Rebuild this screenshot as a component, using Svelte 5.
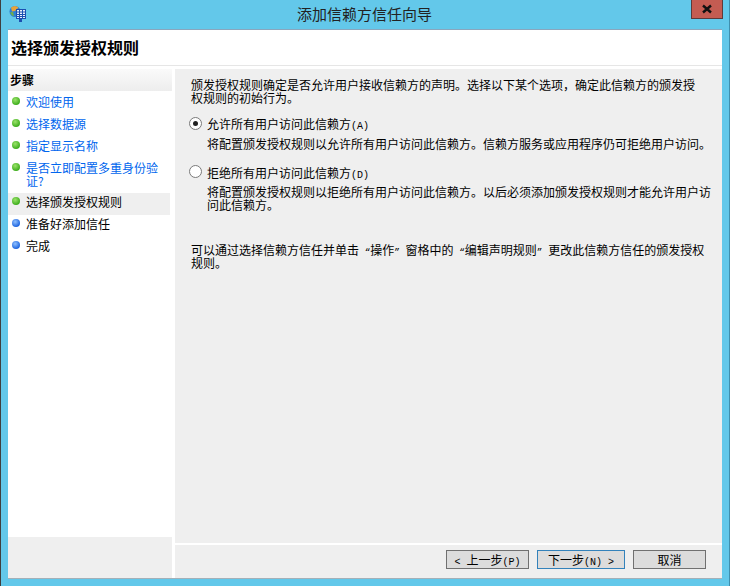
<script>
  const steps = [
    { t: '欢迎使用', c: 'g', link: true },
    { t: '选择数据源', c: 'g', link: true },
    { t: '指定显示名称', c: 'g', link: true },
    { t: '是否立即配置多重身份验证?', c: 'g', link: true },
    { t: '选择颁发授权规则', c: 'g', cur: true },
    { t: '准备好添加信任', c: 'b' },
    { t: '完成', c: 'b' }
  ];
</script>

<div class="win">
  <div class="titlebar">
    <svg class="appicon" width="17" height="18" viewBox="0 0 17 18">
      <circle cx="6" cy="6.500" r="5.500" fill="#2f7fd0"/>
      <path d="M2 2.500 Q6 -0.500 9.500 2.500 L6 6 L3 6.500Z" fill="#e8a33a"/>
      <path d="M1 7.500 L4 7 L5 11 L3 10.500Z" fill="#6fb04a"/>
      <rect x="7.500" y="4.500" width="9" height="9" fill="#e8f0fa" stroke="#1c4fb0"/>
      <path d="M8 7h8M8 9.500h8M8 11.500h8M10.500 5v8M13.500 5v8" stroke="#1c4fb0" stroke-width="1"/>
      <rect x="10" y="14" width="3" height="3" fill="#1c4fb0"/>
    </svg>
    <div class="title">添加信赖方信任向导</div>
    <div class="close"><svg width="12" height="10" viewBox="0 0 12 10"><path d="M2 1.500 L10 8.500 M10 1.500 L2 8.500" stroke="#111" stroke-width="2.400"/></svg></div>
  </div>
  <div class="client">
    <div class="header">选择颁发授权规则</div>
    <div class="body">
      <div class="side">
        <div class="sidehead">步骤</div>
        <ul class="steps">
          {#each steps as s}
            <li class:cur={s.cur} class:link={s.link}>
              <span class="dot {s.c}"></span>
              <span class="label">{s.t}</span>
            </li>
          {/each}
        </ul>
        <div class="sidefoot"></div>
      </div>
      <div class="main">
        <div class="content">
          <p class="intro">颁发授权规则确定是否允许用户接收信赖方的声明。选择以下某个选项，确定此信赖方的颁发授<br>权规则的初始行为。</p>
          <label class="opt first"><span class="radio on"></span><span>允许所有用户访问此信赖方<span class="lat">(A)</span></span></label>
          <p class="desc">将配置颁发授权规则以允许所有用户访问此信赖方。信赖方服务或应用程序仍可拒绝用户访问。</p>
          <label class="opt second"><span class="radio"></span><span>拒绝所有用户访问此信赖方<span class="lat">(D)</span></span></label>
          <p class="desc">将配置颁发授权规则以拒绝所有用户访问此信赖方。以后必须添加颁发授权规则才能允许用户访<br>问此信赖方。</p>
          <p class="note">可以通过选择信赖方信任并单击<span class="q">{' “'}</span>操作<span class="q">{'” '}</span>窗格中的<span class="q">{' “'}</span>编辑声明规则<span class="q">{'” '}</span>更改此信赖方信任的颁发授权<br>规则。</p>
        </div>
        <div class="footer">
          <button class="back"><span class="lat">{'< '}</span>上一步<span class="lat">(P)</span></button>
          <button class="next">下一步<span class="lat">{'(N) >'}</span></button>
          <button class="cancel">取消</button>
        </div>
      </div>
    </div>
  </div>
</div>

<style>
  :global(body) { margin: 0; background: #63c8ea; }
  .win {
    width: 730px; height: 586px; box-sizing: border-box;
    background: #63c8ea;
    border-left: 1px solid #3f3f3f;
    border-right: 1px solid #3f8fae;
    display: flex; flex-direction: column;
    font-family: "Noto Sans CJK SC", "Liberation Sans", sans-serif;
    font-size: 12px; color: #000;
    overflow: hidden;
  }
  .lat { font-family: "Liberation Mono", monospace; font-size: 10px; line-height: 0; white-space: pre; }
  .q { font-family: "Liberation Mono", monospace; font-size: 9.400px; line-height: 0; white-space: pre; }
  .titlebar { height: 29px; flex: none; display: flex; align-items: flex-start; padding-left: 8px; }
  .appicon { margin-top: 5px; flex: none; }
  .title { flex: 1; text-align: center; font-size: 15px; line-height: 27px; color: #222; padding-left: 12px; }
  .close {
    width: 32px; height: 19px; margin-right: 6px; box-sizing: border-box;
    background: #c45c52; border: 1px solid #5e3a3a; border-top: none;
    display: flex; align-items: center; justify-content: center;
  }
  .client {
    margin: 0 7px 7px; height: 550px; display: flex; flex-direction: column;
    background: #fff; border-top: 1px solid #8aa6bd; border-bottom: 1px solid #a4b0b8;
    box-sizing: border-box;
  }
  .header {
    height: 36px; flex: none; box-sizing: border-box; padding-left: 3px;
    font-size: 16px; font-weight: 700; line-height: 34px;
    border-bottom: 1px solid #e6e6e6;
  }
  .body { flex: 1; display: flex; padding-top: 3px; min-height: 0; }
  .side { width: 164px; flex: none; display: flex; flex-direction: column; }
  .sidehead {
    height: 22px; flex: none; padding-left: 2px; font-weight: 700; line-height: 22px; font-size: 12px;
    background: linear-gradient(#fafafa, #ededed);
  }
  .steps { list-style: none; margin: 0; padding: 0; flex: 1; }
  .steps li { display: flex; padding: 3px 2px 0 4px; min-height: 19px; box-sizing: border-box; margin-bottom: 3px; }
  .steps li .label { flex: 1; line-height: 13px; padding-top: 1px; }
  .steps li.link { color: #0066ee; }
  .steps li.cur { background: #efefef; height: 22px; margin: 6px 2px -2px 0; padding-top: 1px; }
  .dot { width: 8px; height: 8px; border-radius: 50%; margin: 3px 6px 0 0; flex: none; }
  .dot.g { background: radial-gradient(circle at 40% 35%, #9be36a, #3fae1e 70%); }
  .dot.b { background: radial-gradient(circle at 40% 35%, #8fc0ff, #1f66e0 70%); }
  .sidefoot { height: 41px; flex: none; background: #efefef; }
  .main {
    flex: 1; margin-left: 3px; background: #efefef; display: flex; flex-direction: column;
  }
  .content { flex: 1; padding: 9px 5px 0 16px; }
  p { margin: 0; line-height: 13px; }
  .opt { display: flex; align-items: center; height: 14px; line-height: 14px; }
  .opt.first { margin-top: 13px; }
  .opt.second { margin-top: 16px; height: 13px; }
  .radio {
    width: 11px; height: 11px; border-radius: 50%; border: 1px solid #7a7a7a; background: #fff;
    margin: -2px 5px 0 -2px; flex: none; position: relative;
  }
  .radio.on::after {
    content: ''; position: absolute; left: 3px; top: 3px; width: 5px; height: 5px; border-radius: 50%; background: #222;
  }
  .desc { margin: 6px 0 0 16px; }
  .note { margin-top: 32px; }
  .footer {
    height: 35px; flex: none; border-top: 2px solid #fff; box-sizing: border-box;
    display: flex; justify-content: flex-end; align-items: flex-start; padding: 5px 16px 0 0; gap: 8px;
  }
  button {
    height: 19px; box-sizing: border-box; padding: 0; background: #dcdcdc; border: 1px solid #707070;
    font: inherit; color: #000; line-height: 16px;
  }
  .back { width: 83px; }
  .next { width: 88px; border-color: #3382bb; }
  .cancel { width: 73px; }
</style>
